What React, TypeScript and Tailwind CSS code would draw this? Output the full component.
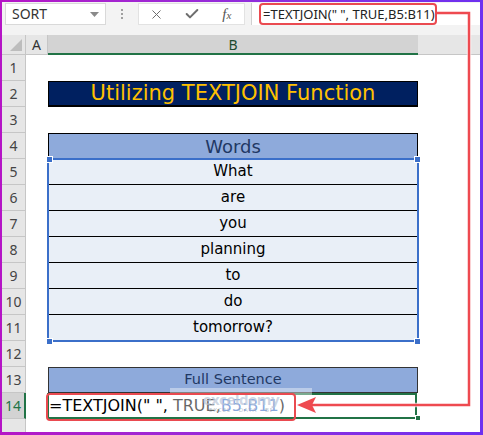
import { X, Check } from "lucide-react";

const rowNums = [1, 2, 3, 4, 5, 6, 7, 8, 9, 10, 11, 12, 13, 14];
const words = ["What", "are", "you", "planning", "to", "do", "tomorrow?"];

const uiFont = { fontFamily: '"Noto Sans", "Liberation Sans", sans-serif' };
const cellFont = { fontFamily: '"DejaVu Sans", "Liberation Sans", sans-serif' };

function Toolbar() {
  return (
    <div className="h-[33px] bg-[#f3f3f3] flex items-start pt-[1px] shrink-0" style={uiFont}>
      <div className="ml-[3px] w-[101px] h-[22px] bg-white border border-[#d9d9d9] flex items-center justify-between pl-[6px] pr-[6px]">
        <span className="text-[14px] text-[#333] leading-none">SORT</span>
        <svg width="9" height="5" viewBox="0 0 9 5">
          <polygon points="0,0 9,0 4.5,5" fill="#8a8a8a" />
        </svg>
      </div>
      <div className="w-[32px] h-[22px] flex flex-col items-center justify-center gap-[2px]">
        <span className="w-[2px] h-[2px] bg-[#a0a0a0]" />
        <span className="w-[2px] h-[2px] bg-[#a0a0a0]" />
        <span className="w-[2px] h-[2px] bg-[#a0a0a0]" />
      </div>
      <div className="w-[107px] h-[22px] bg-white border border-[#e2e2e2] flex items-center">
        <div className="w-[36px] flex justify-center">
          <X size={15} strokeWidth={1.6} color="#6e6e6e" />
        </div>
        <div className="w-[36px] flex justify-center">
          <Check size={16} strokeWidth={3} color="#6e6e6e" />
        </div>
        <div className="w-[35px] flex justify-center">
          <span className="italic text-[15px] text-[#555] leading-none" style={{ fontFamily: '"Liberation Serif", serif' }}>
            f<span className="text-[11px]">x</span>
          </span>
        </div>
      </div>
      <div className="ml-[6px] flex-1 h-[22px] bg-white border-l border-[#d0d0d0] flex items-center pl-[11px]">
        <span className="text-[13px] text-[#222] leading-none whitespace-nowrap">=TEXTJOIN(" ", TRUE,B5:B11)</span>
      </div>
    </div>
  );
}

function ColumnHeaders() {
  return (
    <div className="h-[20px] flex shrink-0 text-[14px] text-[#333]" style={uiFont}>
      <div className="w-[24px] h-full bg-[#e6e6e6] border-r border-b border-[#c6c6c6] flex items-end justify-end p-[3px]">
        <svg width="12" height="12" viewBox="0 0 12 12">
          <polygon points="12,0 12,12 0,12" fill="#bdbdbd" />
        </svg>
      </div>
      <div className="w-[22px] h-full bg-[#e6e6e6] border-r border-b border-[#c6c6c6] flex items-center justify-center">A</div>
      <div className="w-[370px] h-full bg-[#d3d3d3] border-b-2 border-[#217346] flex items-center justify-center text-[#1c4a30]">B</div>
      <div className="flex-1 h-full bg-[#e6e6e6] border-b border-[#c6c6c6]" />
    </div>
  );
}

function RowHeader({ n }: { n: number }) {
  const active = n === 14;
  return (
    <div
      className={`w-[24px] h-full flex items-center justify-center text-[14px] border-b border-[#c6c6c6] ${
        active ? "bg-[#d3d3d3] text-[#217346] border-r-2 border-r-[#217346]" : "bg-[#e6e6e6] text-[#444] border-r border-r-[#c6c6c6]"
      }`}
      style={uiFont}
    >
      {n}
    </div>
  );
}

function CellB({ n }: { n: number }) {
  if (n === 2) {
    return (
      <div className="w-full h-full bg-[#002060] border border-black border-b-2 flex items-center justify-center text-[21px] text-[#ffc000]" style={cellFont}>
        Utilizing TEXTJOIN Function
      </div>
    );
  }
  if (n === 4) {
    return (
      <div className="w-full h-full bg-[#8eaadb] border border-black flex items-center justify-center text-[18px] text-[#1f3864]" style={cellFont}>
        Words
      </div>
    );
  }
  if (n >= 5 && n <= 11) {
    return (
      <div className="w-full h-full bg-[#e9eff7] border-x border-b border-black flex items-center justify-center text-[15px] text-black" style={cellFont}>
        {words[n - 5]}
      </div>
    );
  }
  if (n === 13) {
    return (
      <div className="w-full h-full bg-[#8eaadb] border border-[#333] flex items-center justify-center text-[14.5px] text-[#1f3864]" style={cellFont}>
        Full Sentence
      </div>
    );
  }
  if (n === 14) {
    return (
      <div className="w-full h-full bg-white border-2 border-[#217346] -ml-[1px] flex items-center text-[16px] text-black whitespace-nowrap" style={cellFont}>
        =TEXTJOIN(" ", TRUE,<span className="text-[#3b6fc9]">B5:B11</span>)
      </div>
    );
  }
  return null;
}

function Sheet() {
  return (
    <div className="flex flex-col flex-1">
      {rowNums.map((n) => (
        <div key={n} className="h-[26px] flex shrink-0">
          <RowHeader n={n} />
          <div className="w-[22px] h-full bg-white" />
          <div className="w-[370px] h-full bg-white">
            <CellB n={n} />
          </div>
          <div className="flex-1 h-full bg-white" />
        </div>
      ))}
      <div className="flex-1 flex">
        <div className="w-[24px] h-full bg-[#e6e6e6] border-r border-[#c6c6c6]" />
        <div className="flex-1 bg-white" />
      </div>
    </div>
  );
}

function Overlays() {
  return (
    <>
      {/* selection B5:B11 */}
      <div className="absolute left-[47px] top-[158px] w-[372px] h-[184px] border-2 border-[#3b6fc9] pointer-events-none" />
      {[
        [46, 156],
        [414, 156],
        [46, 338],
        [414, 338],
      ].map(([x, y]) => (
        <div
          key={`${x}-${y}`}
          className="absolute w-[7px] h-[7px] bg-[#3b6fc9] border border-white"
          style={{ left: x, top: y }}
        />
      ))}
      {/* fill handle B14 */}
      <div className="absolute left-[415px] top-[415px] w-[6px] h-[6px] bg-[#217346] border border-white" />

      {/* watermark */}
      <div className="absolute left-[170px] top-[388px] w-[142px] h-[28px] bg-white/40 flex flex-col items-center justify-center leading-none pointer-events-none" style={uiFont}>
        <span className="text-[15px] font-bold text-[#b8c4d8]/70 tracking-tight">exceldemy</span>
        <span className="text-[6px] text-[#9aa5b5]/70 tracking-[1px]">EXCEL · DATA · BI</span>
      </div>

      {/* red highlight boxes */}
      <div className="absolute left-[259px] top-[3px] w-[178px] h-[22px] border-[2.5px] border-[#ea4a50] rounded-[4px]" />
      <div className="absolute left-[46px] top-[393px] w-[250px] h-[28px] border-[2.5px] border-[#ea4a50] rounded-[4px]" />

      {/* arrow */}
      <svg className="absolute left-0 top-0 pointer-events-none" width="483" height="435" viewBox="0 0 483 435">
        <path d="M437 13 H469 V405 H310" fill="none" stroke="#ffffff" strokeOpacity="0.7" strokeWidth="4.5" />
        <path d="M437 13 H469 V405 H310" fill="none" stroke="#ee4a50" strokeWidth="2.5" />
        <polygon points="297,405 316,397 312,405 316,413" fill="#ee4a50" />
      </svg>
    </>
  );
}

export default function App() {
  return (
    <div className="relative w-[483px] h-[435px] bg-linear-to-r from-[#b514c6] to-[#6d30f0] pt-[2px] pl-[2px] pr-[3px] pb-[3px]">
      <div className="w-full h-full bg-white flex flex-col overflow-hidden">
        <Toolbar />
        <ColumnHeaders />
        <Sheet />
      </div>
      <Overlays />
    </div>
  );
}
